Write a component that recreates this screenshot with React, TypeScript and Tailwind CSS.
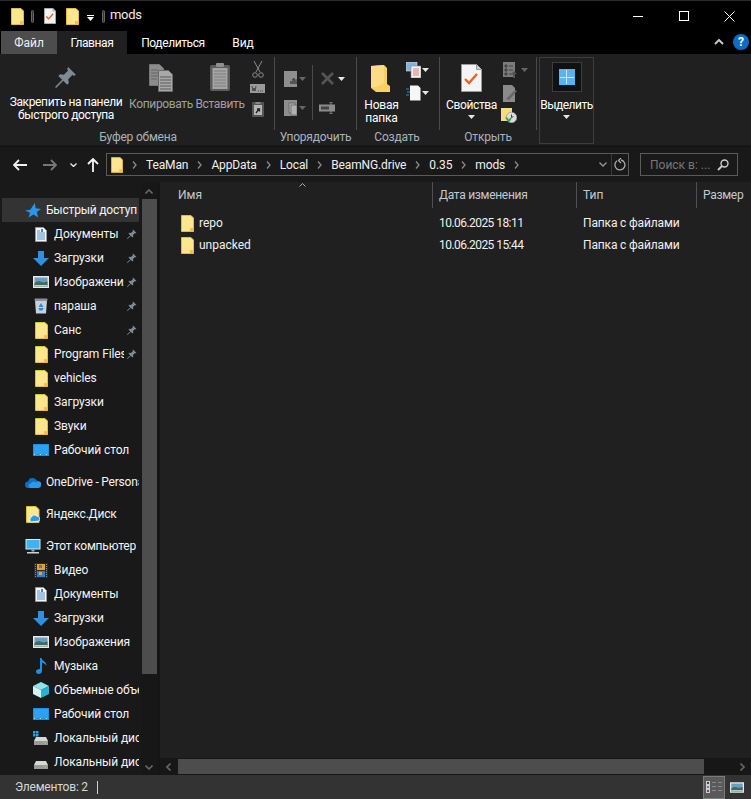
import React from "react";

const Folder = ({ className = "" }: { className?: string }) => (
  <svg viewBox="0 0 13 17" className={className}>
    <path d="M.5.500h9.500l2.500 2.500v13.500H.5z" fill="#fde68f" stroke="#e6b93f" />
    <path d="M9 16.500v-3.500h3.500v3.500z" fill="#f2c04a" />
  </svg>
);

const Note = ({ className = "" }: { className?: string }) => (
  <svg viewBox="0 0 21 28" className={className}>
    <path d="M.5.500h15l5 5v22H.5z" fill="#f4f4f4" stroke="#9a9a9a" />
    <path d="M15.500.500v5h5" fill="#cfcfcf" stroke="#9a9a9a" />
    <path d="M4 15l4 4 8-9" fill="none" stroke="#ee5f24" strokeWidth="2.400" />
  </svg>
);

const Caret = ({ dim = false }: { dim?: boolean }) => (
  <svg viewBox="0 0 7 4" className="w-[7px] h-1 shrink-0">
    <path d="M0 0h7L3.500 4z" fill={dim ? "#666" : "#e6e6e6"} />
  </svg>
);

const Pin = ({ className = "" }: { className?: string }) => (
  <svg viewBox="0 0 20 20" className={className}>
    <path d="M12 1l7 7-2 1-1-1-4 4 .6 3.400-1.600 1.600-3.500-3.500L1 20l-1-1 6.500-6.500L3 9l1.600-1.600L8 8l4-4-1-1z" fill="#7e8a94" />
  </svg>
);

const SmallPin = () => <Pin className="w-[10px] h-[10px] shrink-0" />;

const Monitor = ({ className = "" }: { className?: string }) => (
  <svg viewBox="0 0 16 13" className={className}>
    <rect x="0" y="0" width="16" height="12" rx="0.500" fill="#1c8fe6" />
    <rect x="1" y="1" width="14" height="9.500" fill="#2da0f2" />
    <path d="M1 10.500h14" stroke="#dff" strokeWidth="0.700" strokeDasharray="1 5" />
  </svg>
);

const Picture = ({ className = "" }: { className?: string }) => (
  <svg viewBox="0 0 16 12" className={className}>
    <rect width="16" height="12" fill="#e9e9e9" />
    <rect x="1.500" y="1.500" width="13" height="9" fill="#6d9dc4" />
    <path d="M1.500 7c3-2 5-2 7-1s4 0 6-.5v5h-13z" fill="#3c6e5a" />
    <path d="M1.500 9h13v1.500h-13z" fill="#c6d2cf" />
  </svg>
);

const Doc = ({ className = "" }: { className?: string }) => (
  <svg viewBox="0 0 12 15" className={className}>
    <path d="M.5.500h8l3 3v11H.5z" fill="#f5f5f5" stroke="#999" />
    <path d="M2 4h3M2 6h8M2 8h8M2 10h8M2 12h8" stroke="#3f86c9" strokeWidth="0.900" />
    <path d="M6 2l2 0v3H6z" fill="#3f86c9" />
  </svg>
);

const Down = ({ className = "" }: { className?: string }) => (
  <svg viewBox="0 0 16 15" className={className}>
    <path d="M5 0h6v7h5l-8 8-8-8h5z" fill="#2f8fe0" />
  </svg>
);

const Bin = ({ className = "" }: { className?: string }) => (
  <svg viewBox="0 0 14 16" className={className}>
    <path d="M1 2.500h12l-1 13H2z" fill="#c9d0d6" />
    <rect x="0.500" y="0.500" width="13" height="2.500" rx="1" fill="#8b9299" />
    <path d="M7 5l2.500 4h-5zM4.500 10h5l-1 2.500h-3z" fill="#2a8ad8" />
  </svg>
);

const Cloud = ({ className = "" }: { className?: string }) => (
  <svg viewBox="0 0 16 11" className={className}>
    <path d="M3.500 11a3.200 3.200 0 0 1-.4-6.400 4.600 4.600 0 0 1 8.700-1A3.800 3.800 0 0 1 12 11z" fill="#0f6fc4" />
    <path d="M5 11a2.300 2.300 0 0 1 .8-4.400 3 3 0 0 1 5.200-.8 2.700 2.700 0 0 1 5 2.700A2.600 2.600 0 0 1 13.500 11z" fill="#2a9bea" />
  </svg>
);

const Yandex = ({ className = "" }: { className?: string }) => (
  <svg viewBox="0 0 14 17" className={className}>
    <path d="M.5.500h9.500l3 3v13H.5z" fill="#fde68f" stroke="#e6b93f" />
    <path d="M5 16a3 3 0 0 1 .5-5 3 3 0 0 1 5-1 3 3 0 0 1 2.500 5z" fill="#2a9bea" stroke="#fff" strokeWidth="0.800" />
  </svg>
);

const Computer = ({ className = "" }: { className?: string }) => (
  <svg viewBox="0 0 16 15" className={className}>
    <rect x="0.500" width="15" height="10.500" fill="#d8e6ee" />
    <rect x="1.500" y="1" width="13" height="8.500" fill="#41b3f0" />
    <path d="M6.500 10.500h3v2h-3z" fill="#9fb0ba" />
    <path d="M2 13h12v1.500H2z" fill="#c9d4da" />
  </svg>
);

const Video = ({ className = "" }: { className?: string }) => (
  <svg viewBox="0 0 14 15" className={className}>
    <rect width="14" height="15" fill="#2a2a2a" />
    <rect x="3" y="1" width="8" height="6" fill="#d9a72a" />
    <rect x="3" y="8" width="8" height="6" fill="#2f7fd6" />
    <rect x="5" y="2" width="3" height="3" fill="#4a79c9" />
    <rect x="5" y="9" width="3" height="3" fill="#d8a24a" />
    <path d="M1.500 1v13M12.500 1v13" stroke="#888" strokeDasharray="1 1" />
  </svg>
);

const Music = ({ className = "" }: { className?: string }) => (
  <svg viewBox="0 0 11 16" className={className}>
    <path d="M4 0h1.500c.3 3 5.500 3.500 5 8-.8-2.200-2.800-3-4.500-3.300V13c0 1.700-1.500 3-3.300 3C1 16 0 15 0 13.600 0 12 1.800 10.800 4 11z" fill="#1e8ee6" />
  </svg>
);

const Cube = ({ className = "" }: { className?: string }) => (
  <svg viewBox="0 0 16 16" className={className}>
    <path d="M8 0l8 4-8 4-8-4z" fill="#8fe3ee" />
    <path d="M0 4l8 4v8l-8-4z" fill="#d3f4f7" />
    <path d="M16 4L8 8v8l8-4z" fill="#24b4cf" />
  </svg>
);

const Drive = ({ win = false }: { win?: boolean }) => (
  <svg viewBox="0 0 16 15" className="w-4 h-[15px]">
    {win && <path d="M0 0h2.500v2.500H0zM3 0h2.500v2.500H3zM0 3h2.500v2.500H0zM3 3h2.500v2.500H3z" fill="#1ea3ee" />}
    <path d="M3 6h10l2 4H1z" fill="#d7d7d7" />
    <rect x="1" y="10" width="14" height="4" fill="#9a9a9a" />
    <rect x="11" y="11.500" width="2" height="1.200" fill="#5ee05e" />
  </svg>
);

const Star = ({ className = "" }: { className?: string }) => (
  <svg viewBox="0 0 16 15" className={className}>
    <path d="M9.800 0l.9 5.300 5.300.6-4.200 3.100 1.300 5.600-4.600-3-5 2.900 1.500-4.700L0 7.500l5.300-.7z" fill="#2a95ea" />
  </svg>
);

const TOP = "text-[#f4f4f4]";

type Row = { icon: React.ReactNode; label: string; pin?: boolean };

const quick: Row[] = [
  { icon: <Doc className="w-3 h-[15px]" />, label: "Документы", pin: true },
  { icon: <Down className="w-4 h-[15px]" />, label: "Загрузки", pin: true },
  { icon: <Picture className="w-4 h-3" />, label: "Изображения", pin: true },
  { icon: <Bin className="w-[14px] h-4" />, label: "параша", pin: true },
  { icon: <Folder className="w-[13px] h-[17px]" />, label: "Санс", pin: true },
  { icon: <Folder className="w-[13px] h-[17px]" />, label: "Program Files", pin: true },
  { icon: <Folder className="w-[13px] h-[17px]" />, label: "vehicles" },
  { icon: <Folder className="w-[13px] h-[17px]" />, label: "Загрузки" },
  { icon: <Folder className="w-[13px] h-[17px]" />, label: "Звуки" },
  { icon: <Monitor className="w-4 h-[13px]" />, label: "Рабочий стол" },
];

const pc: Row[] = [
  { icon: <Video className="w-[14px] h-[15px]" />, label: "Видео" },
  { icon: <Doc className="w-3 h-[15px]" />, label: "Документы" },
  { icon: <Down className="w-4 h-[15px]" />, label: "Загрузки" },
  { icon: <Picture className="w-4 h-3" />, label: "Изображения" },
  { icon: <Music className="w-[11px] h-4" />, label: "Музыка" },
  { icon: <Cube className="w-4 h-4" />, label: "Объемные объекты" },
  { icon: <Monitor className="w-4 h-[13px]" />, label: "Рабочий стол" },
  { icon: <Drive win />, label: "Локальный диск (C:)" },
  { icon: <Drive />, label: "Локальный диск (D:)" },
];

const SubRow = ({ icon, label, pin }: Row) => (
  <div className="h-6 shrink-0 flex items-center pl-[33px] w-[139px]">
    <span className="w-4 flex justify-center shrink-0">{icon}</span>
    <span className={`ml-[5px] whitespace-nowrap overflow-hidden tracking-[-0.1px] ${pin ? "w-[70px]" : "w-[86px]"} ${TOP}`}>{label}</span>
    {pin && (
      <span className="ml-[3px]">
        <SmallPin />
      </span>
    )}
  </div>
);

const TopRow = ({ icon, label, active }: { icon: React.ReactNode; label: string; active?: boolean }) => (
  <div className={`h-6 shrink-0 flex items-center pl-[23px] ml-[2px] w-[137px] ${active ? "bg-[#333333]" : ""}`}>
    <span className="w-4 flex justify-center shrink-0">{icon}</span>
    <span className={`ml-[5px] whitespace-nowrap overflow-hidden tracking-[-0.2px] ${TOP}`}>{label}</span>
  </div>
);

const Chevron = () => (
  <svg viewBox="0 0 5 8" className="w-[5px] h-2 shrink-0">
    <path d="M1 .5L4 4 1 7.500" fill="none" stroke="#8a8a8a" strokeWidth="1.300" />
  </svg>
);

const crumbs = ["TeaMan", "AppData", "Local", "BeamNG.drive", "0.35", "mods"];

const Bar = () => <span className="block w-[3px] h-[13px] rounded-sm bg-[#333] border border-[#666] shrink-0" />;

const Sep = () => <div className="w-px h-[73px] bg-[#4a4a4a] shrink-0" />;

const GroupLabel = ({ children, className = "" }: { children: React.ReactNode; className?: string }) => (
  <div className={`h-[15px] text-center text-[#a9b4bd] whitespace-nowrap tracking-[-0.2px] ${className}`}>{children}</div>
);

const Clip = ({ className = "" }: { className?: string }) => (
  <svg viewBox="0 0 20 28" className={className}>
    <rect y="2" width="20" height="26" rx="2" fill="#5c5c5c" />
    <rect x="2.500" y="5" width="15" height="21" fill="#a4a4a4" />
    <path d="M4 8h12M4 11h12M4 14h12M4 17h12M4 20h12M4 23h12" stroke="#808080" />
    <rect x="6" width="8" height="4" rx="1" fill="#8f8f8f" />
  </svg>
);

const Copy = ({ className = "" }: { className?: string }) => (
  <svg viewBox="0 0 24 28" className={className}>
    <path d="M.5.500h10l4 4v17H.5z" fill="#8c8c8c" stroke="#777" />
    <path d="M9.500 6.500h10l4 4v17h-14z" fill="#a8a8a8" stroke="#6a6a6a" />
    <path d="M11 13h11M11 16h11M11 19h11M11 22h11M11 25h11" stroke="#5a5a5a" />
    <path d="M2 6h7M2 9h7M2 12h7M2 15h6" stroke="#666" />
  </svg>
);

const Tool = ({ children, w, h, cls = "" }: { children: React.ReactNode; w: number; h: number; cls?: string }) => (
  <svg viewBox={`0 0 ${w} ${h}`} width={w} height={h} className={`shrink-0 ${cls}`}>
    {children}
  </svg>
);

export default function App() {
  return (
    <div
      className="w-[751px] h-[799px] flex flex-col overflow-hidden bg-black text-[12px] leading-4 text-white border-t border-[#2a2a2a]"
      style={{ fontFamily: 'Roboto,"Open Sans",sans-serif' }}
    >
      {/* Title bar */}
      <div className="h-[30px] shrink-0 flex items-center pl-[11px]">
        <Folder className="w-[13px] h-[17px]" />
        <span className="ml-[7px]"><Bar /></span>
        <Note className="ml-[10px] w-[12px] h-[16px]" />
        <Folder className="ml-[10px] w-[13px] h-[17px]" />
        <svg viewBox="0 0 7 6" className="ml-[8px] w-[7px] h-[6px] mt-[3px]">
          <path d="M0 0h7v1H0zM0 2h7L3.500 6z" fill="#fff" />
        </svg>
        <span className="ml-[8px]"><Bar /></span>
        <span className="ml-[5px] text-[13px] text-[#eee] -mt-[2px] tracking-[-0.3px]">mods</span>
        <div className="ml-auto flex items-center">
          <div className="w-[46px] flex justify-center"><div className="w-[10px] h-px bg-white" /></div>
          <div className="w-[46px] flex justify-center"><div className="w-[10px] h-[10px] border border-white" /></div>
          <div className="w-[44px] flex justify-center">
            <svg viewBox="0 0 11 11" className="w-[11px] h-[11px]"><path d="M.5.500l10 10M10.500.500l-10 10" stroke="#fff" /></svg>
          </div>
        </div>
      </div>

      {/* Tabs */}
      <div className="h-[23px] shrink-0 flex items-stretch pl-px">
        <div className="w-[56px] bg-[#4d4d4d] flex items-center justify-center text-[#f0f0f0]">Файл</div>
        <div className="w-[70px] bg-[#202020] flex items-center justify-center tracking-[-0.4px]">Главная</div>
        <div className="w-[90px] ml-px flex items-center justify-center tracking-[-0.4px]">Поделиться</div>
        <div className="w-[50px] flex items-center justify-center">Вид</div>
        <div className="ml-auto flex items-center pr-[2px] pb-[2px]">
          <svg viewBox="0 0 10 6" className="w-[10px] h-[6px] mr-[9px]"><path d="M1 5l4-4 4 4" fill="none" stroke="#c8c8c8" strokeWidth="2" /></svg>
          <div className="w-4 h-4 rounded-full bg-[#0b6cc4] flex items-center justify-center text-[12px] font-bold text-white">?</div>
        </div>
      </div>

      {/* Ribbon */}
      <div className="h-[92px] shrink-0 bg-[#202020] flex items-start pt-[3px] border-b border-[#1a1a1a]">
        {/* Clipboard */}
        <div className="w-[274px] shrink-0 flex flex-col">
          <div className="h-[73px] flex">
            <div className="w-[127px] pl-[5px] shrink-0 flex flex-col items-center pt-[9px]">
              <Pin className="w-[22px] h-[22px]" />
              <div className="mt-[8px] text-center whitespace-nowrap leading-[13px] tracking-[-0.35px]">Закрепить на панели<br />быстрого доступа</div>
            </div>
            <div className="w-[68px] shrink-0 flex flex-col items-center pt-[7px]">
              <Copy className="w-6 h-7" />
              <div className="mt-[6px] text-[#a0a0a0] whitespace-nowrap leading-[13px] tracking-[-0.35px]">Копировать</div>
            </div>
            <div className="w-[50px] shrink-0 flex flex-col items-center pt-[6px]">
              <Clip className="w-5 h-7" />
              <div className="mt-[7px] text-[#a0a0a0] whitespace-nowrap leading-[13px] tracking-[-0.35px]">Вставить</div>
            </div>
            <div className="flex flex-col items-center gap-[6px] w-[25px] pt-[4px]">
              <Tool w={12} h={17}><path d="M2 0l6 11M10 0L4 11" stroke="#8a8a8a" fill="none" /><circle cx="3" cy="14" r="2.300" fill="none" stroke="#8a8a8a" /><circle cx="9" cy="14" r="2.300" fill="none" stroke="#8a8a8a" /></Tool>
              <Tool w={15} h={9}><rect width="15" height="9" fill="#9a9a9a" /><path d="M2 2l1 5 1-3 1 3 1-5M8 7h1M10 7h1M12 7h1" stroke="#333" fill="none" strokeWidth="0.800" /></Tool>
              <Tool w={12} h={15} cls="mt-[3px]"><rect width="12" height="15" rx="1" fill="#555" /><rect x="2" y="3" width="8" height="10" fill="#b5b5b5" /><path d="M4 11l3-4M5 7h2.500v2.500" stroke="#222" fill="none" strokeWidth="1.300" /><rect x="3.500" y="0" width="5" height="2" fill="#888" /></Tool>
            </div>
          </div>
          <GroupLabel className="-mt-[1px] pl-[2px]">Буфер обмена</GroupLabel>
        </div>
        <Sep />
        {/* Order */}
        <div className="w-[81px] shrink-0 flex flex-col">
          <div className="h-[73px] flex pt-[14px]">
            <div className="w-[37px] flex flex-col gap-[13px] pl-[9px]">
              <div className="flex items-center gap-[1px]">
                <Tool w={13} h={16}><rect width="13" height="16" fill="#8e8e8e" /><path d="M13 9H8l2-2v5l-2-2" stroke="#444" fill="#444" /><rect x="6" y="10" width="7" height="3" fill="#555" /></Tool>
                <span className="ml-[1px]"><Caret dim /></span>
              </div>
              <div className="flex items-center gap-[1px]">
                <Tool w={13} h={16}><rect width="13" height="16" fill="#8e8e8e" /><path d="M5 3h6v10H5z" fill="#a9a9a9" stroke="#555" strokeWidth="0.600" /><path d="M7 5h6v10H7z" fill="#b0b0b0" stroke="#555" strokeWidth="0.600" /></Tool>
                <span className="ml-[1px]"><Caret dim /></span>
              </div>
            </div>
            <div className="w-px h-[55px] bg-[#4a4a4a] -mt-[6px] shrink-0" />
            <div className="flex flex-col pl-[8px] gap-[17px]">
              <div className="flex items-center gap-[4px] mt-[1px]">
                <Tool w={13} h={13}><path d="M1 1l11 11M12 1L1 12" stroke="#555" strokeWidth="2.600" /></Tool>
                <Caret />
              </div>
              <Tool w={16} h={12} cls="-ml-[2px]"><path d="M12 0v12M10 0h4M10 12h4" stroke="#8a8a8a" /><rect y="2.500" width="16" height="7" fill="#8c8c8c" /><rect x="2" y="4.500" width="8" height="3" fill="#444" /></Tool>
            </div>
          </div>
          <GroupLabel className="-mt-[1px]">Упорядочить</GroupLabel>
        </div>
        <Sep />
        {/* Create */}
        <div className="w-[82px] shrink-0 flex flex-col">
          <div className="h-[73px] flex">
            <div className="w-[49px] shrink-0 flex flex-col items-center pt-[8px]">
              <svg viewBox="0 0 19 27" className="w-[19px] h-[27px] -ml-[3px]">
                <path d="M0 1l13-1 3 3v16l3 2v6H5l-5-4z" fill="#fccf63" />
                <path d="M0 22V1l13-1v18l-8 4z" fill="#fddc85" />
              </svg>
              <div className="mt-[7px] text-center leading-[13px] whitespace-nowrap tracking-[-0.2px]">Новая<br />папка</div>
            </div>
            <div className="flex flex-col gap-[7px] pt-[5px]">
              <div className="flex items-center gap-[1px]">
                <Tool w={15} h={16}><rect width="11" height="9" fill="#7fb4e0" stroke="#ddd" strokeWidth="0.600" /><rect x="5" y="4" width="10" height="12" fill="#f2f2f2" stroke="#888" strokeWidth="0.600" /><path d="M7 7h6M7 9h6M7 11h6M7 13h6" stroke="#d04a4a" strokeWidth="0.700" /></Tool>
                <Caret />
              </div>
              <div className="flex items-center gap-[1px]">
                <Tool w={15} h={16}><path d="M4 .5h8l2.500 2.500v12.500H4z" fill="#f6f6f6" /><path d="M0 4h3M1 7h3M0 10h3" stroke="#2a8ad8" /></Tool>
                <Caret />
              </div>
            </div>
          </div>
          <GroupLabel className="-mt-[1px] -ml-[2px]">Создать</GroupLabel>
        </div>
        <Sep />
        {/* Open */}
        <div className="w-[96px] shrink-0 flex flex-col">
          <div className="h-[73px] flex">
            <div className="w-[60px] shrink-0 flex flex-col items-center pt-[7px] pl-[3px]">
              <Note className="w-[21px] h-[28px]" />
              <div className="mt-[7px] whitespace-nowrap leading-[13px] tracking-[-0.35px]">Свойства</div>
              <div className="mt-[3px]"><Caret /></div>
            </div>
            <div className="flex flex-col pl-[3px] pt-[5px]">
              <div className="flex items-center gap-[3px]">
                <Tool w={15} h={16}><rect width="12" height="15" fill="#7c7c7c" /><path d="M2 3h2v2H2zM2 7h2v2H2zM2 11h2v2H2zM6 4h4M6 8h4M6 12h4" stroke="#444" fill="#444" /><path d="M11 9l3 3h-2v4h-2v-4H8z" fill="#555" /></Tool>
                <Caret dim />
              </div>
              <Tool w={15} h={17} cls="mt-[7px]"><path d="M0 0h9l3 3v14H0z" fill="#8a8a8a" /><path d="M3 14L12 5l2 1-8 9z" fill="#666" /></Tool>
              <Tool w={16} h={15} cls="-ml-[2px] mt-[6px]"><rect width="11" height="13" fill="#f6dc7d" /><circle cx="10.500" cy="9.500" r="5.300" fill="#ddd" stroke="#888" strokeWidth="0.600" /><path d="M5 9.500l3 3.500 2-3" stroke="#2aa84a" strokeWidth="1.800" fill="none" /><path d="M10.500 6.500v3l2-1" stroke="#444" fill="none" /></Tool>
            </div>
          </div>
          <GroupLabel className="-mt-[1px]">Открыть</GroupLabel>
        </div>
        <Sep />
        {/* Select */}
        <div className="w-[55px] h-[87px] ml-[2px] border border-[#3d3d3d] flex flex-col items-center shrink-0 pt-[4px]">
          <div className="w-[30px] h-[30px] bg-[#111111] border border-[#3d3d3d] flex items-center justify-center">
            <div className="grid grid-cols-2 gap-px bg-[#cfeafb] border border-[#57b4f2] w-4 h-4">
              <div className="bg-[#57b4f2]" /><div className="bg-[#57b4f2]" /><div className="bg-[#57b4f2]" /><div className="bg-[#57b4f2]" />
            </div>
          </div>
          <div className="mt-[7px] whitespace-nowrap leading-[13px] tracking-[-0.5px]">Выделить</div>
          <div className="mt-[3px]"><Caret /></div>
        </div>
      </div>

      {/* Nav */}
      <div className="h-[36px] shrink-0 bg-[#191919] flex items-center border-t border-[#111]">
        <svg viewBox="0 0 14 12" className="ml-[13px] w-[14px] h-3"><path d="M6 1L1 6l5 5M1 6h13" fill="none" stroke="#f0f0f0" strokeWidth="1.800" /></svg>
        <svg viewBox="0 0 14 12" className="ml-[16px] w-[14px] h-3"><path d="M8 1l5 5-5 5M13 6H0" fill="none" stroke="#777" strokeWidth="1.800" /></svg>
        <svg viewBox="0 0 7 4" className="ml-[13px] w-[7px] h-1"><path d="M.5.500L3.500 3.500 6.500.500" fill="none" stroke="#eee" strokeWidth="1.300" /></svg>
        <svg viewBox="0 0 12 14" className="ml-[10px] w-3 h-[14px]"><path d="M1 6l5-5 5 5M6 1v13" fill="none" stroke="#f5f5f5" strokeWidth="1.800" /></svg>
        <div className="ml-[7px] w-[523px] h-[23px] border border-[#5a5a5a] flex items-center pl-[4px]">
          <Folder className="w-[12px] h-[16px] shrink-0" />
          <div className="ml-[9px] flex items-center gap-[9px] text-[#f0f0f0] whitespace-nowrap tracking-[-0.12px]">
            {crumbs.map((c) => (
              <React.Fragment key={c}>
                <Chevron />
                <span>{c}</span>
              </React.Fragment>
            ))}
            <Chevron />
          </div>
          <div className="ml-auto flex items-center">
            <svg viewBox="0 0 8 5" className="w-2 h-[5px] mr-[4px]"><path d="M.5.500l3.500 3.500 3.500-3.500" fill="none" stroke="#999" strokeWidth="1.300" /></svg>
            <div className="w-px h-[21px] bg-[#3a3a3a]" />
            <svg viewBox="0 0 12 13" className="w-3 h-[13px] mx-[2px]"><path d="M3 2.800a5 5 0 1 0 4-.8M7 0L4.500 2.500 7 5" fill="none" stroke="#aaa" strokeWidth="1.300" /></svg>
          </div>
        </div>
        <div className="ml-[11px] w-[98px] h-[23px] border border-[#5a5a5a] flex items-center pl-[9px] text-[#777]">
          <span className="whitespace-nowrap">Поиск в: ...</span>
          <svg viewBox="0 0 12 12" className="ml-auto mr-[8px] w-3 h-3"><circle cx="7.500" cy="4.500" r="3.500" fill="none" stroke="#ccc" strokeWidth="1.400" /><path d="M5 7l-4 4" stroke="#ccc" strokeWidth="1.800" /></svg>
        </div>
      </div>

      {/* Main */}
      <div className="flex-1 min-h-0 flex">
        <div className="w-[141px] shrink-0 bg-[#191919] flex flex-col overflow-hidden pt-[16px]">
          <TopRow icon={<Star className="w-4 h-[15px]" />} label="Быстрый доступ" active />
          {quick.map((r, i) => <SubRow key={i} {...r} />)}
          <div className="h-2 shrink-0" />
          <TopRow icon={<Cloud className="w-4 h-[11px]" />} label="OneDrive - Personal" />
          <div className="h-2 shrink-0" />
          <TopRow icon={<Yandex className="w-[14px] h-[17px]" />} label="Яндекс.Диск" />
          <div className="h-2 shrink-0" />
          <TopRow icon={<Computer className="w-4 h-[15px]" />} label="Этот компьютер" />
          {pc.map((r, i) => <SubRow key={i} {...r} />)}
        </div>
        <div className="w-4 shrink-0 bg-[#171717] flex flex-col items-center">
          <svg viewBox="0 0 8 5" className="w-2 h-[5px] mt-[7px] shrink-0"><path d="M.5 4.500L4 1l3.500 3.500" fill="none" stroke="#666" strokeWidth="1.600" /></svg>
          <div className="w-[15px] h-[475px] mt-[5px] bg-[#4d4d4d] shrink-0" />
          <svg viewBox="0 0 8 5" className="w-2 h-[5px] mt-auto mb-[5px] shrink-0"><path d="M.5.500L4 4l3.500-3.500" fill="none" stroke="#666" strokeWidth="1.600" /></svg>
        </div>
        <div className="w-[3px] shrink-0 bg-[#151515]" />
        <div className="flex-1 min-w-0 bg-[#202020] flex flex-col">
          <div className="h-[27px] shrink-0 flex relative pb-px">
            <svg viewBox="0 0 7 4" className="absolute left-[139px] top-px w-[7px] h-1"><path d="M.5 3.500L3.500.5l3 3" fill="none" stroke="#aaa" /></svg>
            <div className="w-[273px] pl-[18px] flex items-center border-r border-[#505050] text-[#c4c9d0]">Имя</div>
            <div className="w-[144px] pl-[6px] flex items-center border-r border-[#505050] text-[#c4c9d0] tracking-[-0.3px]">Дата изменения</div>
            <div className="w-[120px] pl-[6px] flex items-center border-r border-[#505050] text-[#c4c9d0]">Тип</div>
            <div className="pl-[6px] flex items-center text-[#c4c9d0] tracking-[-0.3px]">Размер</div>
          </div>
          <div className="flex-1 min-h-0 pt-[3px] flex flex-col">
            {[
              ["repo", "10.06.2025 18:11"],
              ["unpacked", "10.06.2025 15:44"],
            ].map(([n, d]) => (
              <div key={n} className="h-[22px] flex items-center text-[#f0f0f0]">
                <div className="w-[273px] pl-[21px] flex items-center">
                  <Folder className="w-[13px] h-[17px]" />
                  <span className="ml-[5px]">{n}</span>
                </div>
                <div className="w-[144px] pl-[6px] tracking-[-0.55px]">{d}</div>
                <div className="pl-[6px] tracking-[-0.15px]">Папка с файлами</div>
              </div>
            ))}
          </div>
          <div className="h-[17px] shrink-0 bg-[#171717] flex items-center">
            <svg viewBox="0 0 5 8" className="w-[5px] h-2 ml-[6px] shrink-0"><path d="M4.500.500L1 4l3.500 3.500" fill="none" stroke="#666" strokeWidth="1.600" /></svg>
            <div className="w-[526px] h-[15px] ml-[7px] bg-[#4d4d4d] shrink-0" />
            <svg viewBox="0 0 5 8" className="w-[5px] h-2 ml-auto mr-[6px] shrink-0"><path d="M.5.500L4 4 .5 7.500" fill="none" stroke="#666" strokeWidth="1.600" /></svg>
          </div>
        </div>
      </div>

      {/* Status */}
      <div className="h-6 shrink-0 bg-[#333333] flex items-center pl-[15px] text-[#d8d8d8]">
        <span className="w-[76px] whitespace-nowrap tracking-[-0.2px]">Элементов: 2</span>
        <div className="ml-[6px] w-px h-[13px] bg-[#d0d0d0]" />
        <div className="ml-auto flex items-center pr-[7px]">
          <div className="w-[22px] h-[23px] bg-[#5a5a5a] border border-[#7b7b7b] flex items-center justify-center">
            <svg viewBox="0 0 16 12" className="w-4 h-3">
              <rect width="4" height="12" fill="#cfcfcf" />
              <rect x="1" y="1" width="2" height="2" fill="#444" />
              <rect x="1" y="5" width="2" height="2" fill="#4a8ad0" />
              <rect x="1" y="9" width="2" height="2" fill="#b03030" />
              <path d="M6 1.500h4M12 1.500h4M6 5.500h4M12 5.500h4M6 9.500h4M12 9.500h4" stroke="#8a8a8a" />
            </svg>
          </div>
          <Picture className="ml-[5px] w-[14px] h-[11px]" />
        </div>
      </div>
    </div>
  );
}
